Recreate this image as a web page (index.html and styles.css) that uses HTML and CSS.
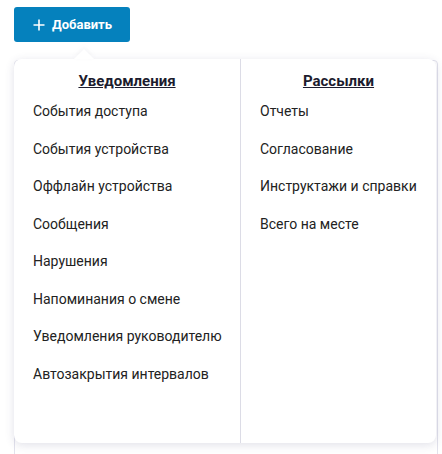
FILE: index.html
```html
<!DOCTYPE html>
<html lang="ru">
<head>
    <meta charset="UTF-8">
    <meta name="viewport" content="width=device-width, initial-scale=1.0">
    <title>Добавить</title>
    <link rel="stylesheet" href="styles.css">
</head>
<body>
    <div class="toolbar">
        <div class="add-wrap">
            <button class="add-button">
                <svg class="plus" width="12" height="12" viewBox="0 0 12 12"><path d="M6 0.5V11.5M0.5 6H11.5" stroke="#fff" stroke-width="1.6"/></svg>
                Добавить
            </button>

            <div class="dropdown">
                <div class="dropdown-col">
                    <h3>Уведомления</h3>
                    <a href="#">События доступа</a>
                    <a href="#">События устройства</a>
                    <a href="#">Оффлайн устройства</a>
                    <a href="#">Сообщения</a>
                    <a href="#">Нарушения</a>
                    <a href="#">Напоминания о смене</a>
                    <a href="#">Уведомления руководителю</a>
                    <a href="#">Автозакрытия интервалов</a>
                </div>
                <div class="dropdown-col right">
                    <h3>Рассылки</h3>
                    <a href="#">Отчеты</a>
                    <a href="#">Согласование</a>
                    <a href="#">Инструктажи и справки</a>
                    <a href="#">Всего на месте</a>
                </div>
            </div>
        </div>
    </div>

    <main class="table-box"></main>
</body>
</html>
```

FILE: styles.css
```css
body {
    font-family: Roboto, "Liberation Sans", sans-serif;
    margin: 0;
    padding: 7px 4px 0 14px;
    background-color: #fff;
    color: #222;
    overflow: hidden;
}

.toolbar {
    height: 35px;
}

.add-wrap {
    position: relative;
    display: inline-block;
}

.add-button {
    display: flex;
    align-items: center;
    gap: 7px;
    height: 35px;
    width: 116px;
    padding: 0 0 0 19px;
    border: none;
    border-radius: 3px;
    background-color: #0581bd;
    color: #fff;
    font-family: Roboto, "Liberation Sans", sans-serif;
    font-size: 13px;
    font-weight: 700;
    cursor: pointer;
}

.dropdown {
    position: absolute;
    top: 52px;
    left: 0;
    z-index: 10;
    width: 422px;
    height: 384px;
    display: flex;
    background: #fff;
    border-radius: 8px;
    box-shadow: 0 2px 10px rgba(60, 60, 110, 0.16);
}

.dropdown::before {
    content: "";
    position: absolute;
    top: -10px;
    left: 60px;
    border-left: 10px solid transparent;
    border-right: 10px solid transparent;
    border-bottom: 10px solid #fff;
    filter: drop-shadow(0 -2px 2px rgba(60, 60, 110, 0.06));
}

.dropdown-col {
    display: flex;
    flex-direction: column;
    width: 227px;
    padding: 11px 0 0 19px;
    box-sizing: border-box;
    border-right: 1px solid #dcdce6;
}

.dropdown-col.right {
    width: 195px;
    border-right: none;
}

.dropdown-col h3 {
    margin: 0 0 0 -19px;
    height: 22px;
    line-height: 22px;
    text-align: center;
    font-size: 15px;
    font-weight: 700;
    color: #1c1c2e;
    text-decoration: underline;
}

.dropdown-col a {
    display: block;
    height: 37.5px;
    line-height: 39px;
    font-size: 14px;
    color: #222;
    text-decoration: none;
    white-space: nowrap;
}

.table-box {
    margin-top: 18px;
    height: 400px;
    border: 1px solid #e2e2ec;
    border-radius: 4px;
}
```
